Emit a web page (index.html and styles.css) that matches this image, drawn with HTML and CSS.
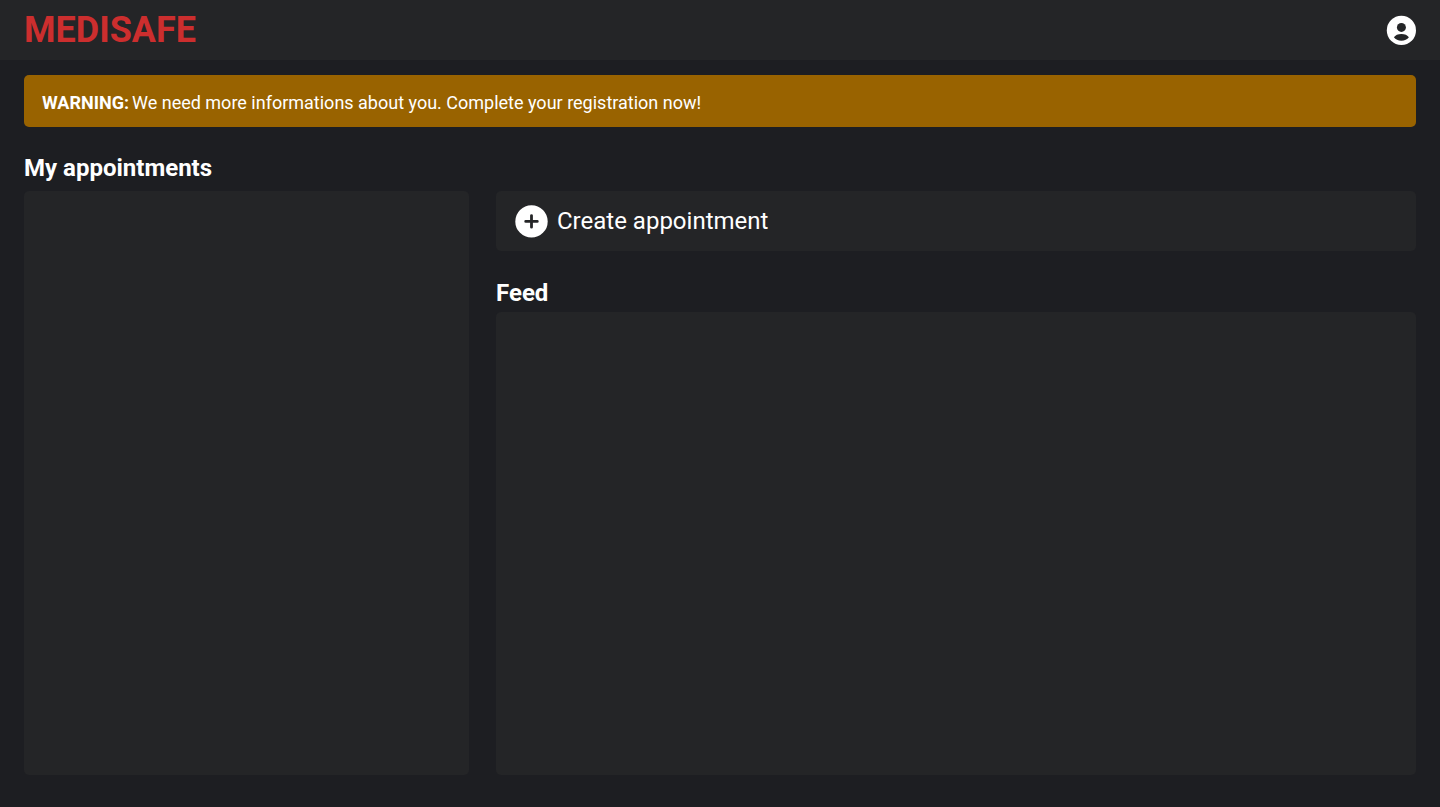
FILE: index.html
```html
<!DOCTYPE html>
<html lang="en">
<head>
<meta charset="utf-8">
<title>Medisafe</title>
<link rel="stylesheet" href="styles.css">
</head>
<body>
<header class="topbar">
  <h1 class="brand">MEDISAFE</h1>
  <svg class="avatar" viewBox="0 0 30 30" aria-label="Account">
    <circle class="icon-fill" cx="15.400" cy="15.400" r="14.600"/>
    <circle class="icon-cut" cx="15.400" cy="12.400" r="4.500"/>
    <path class="icon-cut" d="M7.900 22.200C9.200 20.100 12.100 18.900 15.400 18.900s6.200 1.200 7.500 3.300C21.300 24.400 18.600 25.700 15.400 25.700s-5.900-1.300-7.500-3.500z"/>
  </svg>
</header>
<main class="page">
  <div class="alert"><strong class="alert-label">WARNING:</strong> We need more informations about you. Complete your registration now!</div>
  <div class="columns">
    <section class="column">
      <h2 class="heading">My appointments</h2>
      <div class="panel"></div>
    </section>
    <section class="column main-column">
      <button class="create">
        <svg class="plus" viewBox="0 0 34 34" aria-hidden="true">
          <circle class="icon-fill" cx="17.500" cy="17.400" r="16.200"/>
          <path class="plus-line" d="M17.500 11.600v11.600M11.700 17.400h11.600"/>
        </svg>
        <span>Create appointment</span>
      </button>
      <h2 class="heading feed-heading">Feed</h2>
      <div class="panel"></div>
    </section>
  </div>
</main>
</body>
</html>
```
FILE: styles.css
```css
* { box-sizing: border-box; }
body {
  margin: 0;
  height: 100vh;
  display: flex;
  flex-direction: column;
  background: #1d1e22;
  color: #fff;
  font-family: Roboto, sans-serif;
}
.topbar {
  height: 60px;
  flex: none;
  padding: 0 24px;
  display: flex;
  align-items: center;
  justify-content: space-between;
  background: #242527;
}
.brand {
  margin: 0;
  font-size: 36px;
  line-height: 60px;
  font-weight: 700;
  color: #cc2e2e;
}
.avatar { width: 30px; height: 30px; overflow: visible; }
.icon-fill { fill: #fff; }
.icon-cut { fill: #242527; }
.page {
  flex: 1;
  display: flex;
  flex-direction: column;
  padding: 15px 24px 32px;
}
.alert {
  height: 52px;
  flex: none;
  padding: 2px 18px 0;
  border-radius: 5px;
  background: #996300;
  font-size: 18px;
  line-height: 52px;
}
.alert-label { margin-right: -1.5px; }
.columns {
  flex: 1;
  display: grid;
  grid-template-columns: 445px 1fr;
  gap: 27px;
  padding-top: 26px;
}
.column { display: flex; flex-direction: column; }
.heading {
  margin: 0;
  height: 38px;
  font-size: 24px;
  line-height: 30px;
  font-weight: 700;
}
.main-column { padding-top: 38px; }
.feed-heading { height: 35px; margin-top: 26px; line-height: 32px; }
.panel { flex: 1; border-radius: 5px; background: #242527; }
.create {
  height: 60px;
  flex: none;
  display: flex;
  align-items: center;
  gap: 9px;
  padding: 0 18px;
  border: 0;
  border-radius: 5px;
  background: #242527;
  color: #fff;
  font: 400 24px/60px Roboto, sans-serif;
}
.plus { width: 34px; height: 34px; }
.plus-line { fill: none; stroke: #242527; stroke-width: 2.8; stroke-linecap: round; }
```
